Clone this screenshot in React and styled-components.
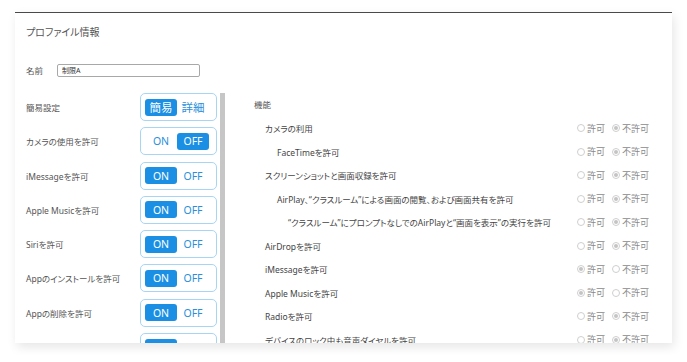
import React from "react"
import styled, { createGlobalStyle } from "styled-components"

const GlobalStyle = createGlobalStyle`
  body {
    margin: 0;
    background: #ffffff;
    font-family: "Noto Sans", "Noto Sans CJK JP", sans-serif;
    font-feature-settings: "palt";
  }
`

const leftRows = [
  { label: "簡易設定", options: ["簡易", "詳細"], active: 0 },
  { label: "カメラの使用を許可", options: ["ON", "OFF"], active: 1 },
  { label: "iMessageを許可", options: ["ON", "OFF"], active: 0 },
  { label: "Apple Musicを許可", options: ["ON", "OFF"], active: 0 },
  { label: "Siriを許可", options: ["ON", "OFF"], active: 0 },
  { label: "Appのインストールを許可", options: ["ON", "OFF"], active: 0 },
  { label: "Appの削除を許可", options: ["ON", "OFF"], active: 0 },
  { label: "システムAppの削除を許可", options: ["ON", "OFF"], active: 0 },
]

const rightRows = [
  { label: "カメラの利用", level: 1, allow: false },
  { label: "FaceTimeを許可", level: 2, allow: false },
  { label: "スクリーンショットと画面収録を許可", level: 1, allow: false },
  { label: "AirPlay、“クラスルーム”による画面の閲覧、および画面共有を許可", level: 2, allow: false },
  { label: "“クラスルーム”にプロンプトなしでのAirPlayと“画面を表示”の実行を許可", level: 3, allow: false },
  { label: "AirDropを許可", level: 1, allow: false },
  { label: "iMessageを許可", level: 1, allow: true },
  { label: "Apple Musicを許可", level: 1, allow: true },
  { label: "Radioを許可", level: 1, allow: false },
  { label: "デバイスのロック中も音声ダイヤルを許可", level: 1, allow: false },
  { label: "Safariを許可", level: 1, allow: true },
]

const App = () => (
  <Page>
    <GlobalStyle />
    <Card>
      <Title>プロファイル情報</Title>
      <NameRow>
        <NameLabel>名前</NameLabel>
        <NameInput defaultValue="制限A" />
      </NameRow>
      <Body>
        <LeftColumn>
          {leftRows.map(row => (
            <ToggleRow key={row.label}>
              <RowLabel>{row.label}</RowLabel>
              <Toggle>
                {row.options.map((opt, i) => (
                  <Segment key={opt} $active={i === row.active} $cjk={!/[A-Z]/.test(opt)}>
                    {opt}
                  </Segment>
                ))}
              </Toggle>
            </ToggleRow>
          ))}
        </LeftColumn>
        <RightColumn>
          <SectionTitle>機能</SectionTitle>
          {rightRows.map(row => (
            <FeatureRow key={row.label}>
              <FeatureLabel $level={row.level}>{row.label}</FeatureLabel>
              <RadioGroup>
                <RadioItem>
                  <RadioDot $checked={row.allow} />
                  許可
                </RadioItem>
                <RadioItem>
                  <RadioDot $checked={!row.allow} />
                  不許可
                </RadioItem>
              </RadioGroup>
            </FeatureRow>
          ))}
        </RightColumn>
      </Body>
    </Card>
  </Page>
)

export default App

const Page = styled.div`
  padding: 12px 15px;
`

const Card = styled.div`
  width: 657px;
  height: 331px;
  box-sizing: border-box;
  background: #fff;
  border-top: 1px solid #4a4a4a;
  box-shadow: 2px 4px 10px rgba(0, 0, 0, 0.1);
  overflow: hidden;
  display: flex;
  flex-direction: column;
`

const Title = styled.div`
  height: 39px;
  line-height: 39px;
  padding-left: 11px;
  font-size: 10px;
  color: #555;
  flex-shrink: 0;
`

const NameRow = styled.div`
  height: 36px;
  padding: 0 0 5px 11px;
  display: flex;
  align-items: center;
  flex-shrink: 0;
`

const NameLabel = styled.span`
  width: 31px;
  font-size: 8.5px;
  color: #555;
`

const NameInput = styled.input`
  width: 143px;
  height: 13px;
  box-sizing: border-box;
  border: 1px solid #a8a8a8;
  border-radius: 2px;
  padding: 0 4px;
  font-family: inherit;
  font-size: 7px;
  color: #333;
  outline: none;
`

const Body = styled.div`
  flex: 1;
  display: flex;
  min-height: 0;
`

const LeftColumn = styled.div`
  width: 210px;
  flex-shrink: 0;
  padding-left: 11px;
  box-sizing: border-box;
  border-right: 5px solid #c6c6c6;
  display: flex;
  flex-direction: column;
  gap: 6.3px;
`

const ToggleRow = styled.div`
  height: 28px;
  flex-shrink: 0;
  display: flex;
  align-items: center;
`

const RowLabel = styled.span`
  width: 114px;
  font-size: 8.5px;
  color: #555;
  white-space: nowrap;
`

const Toggle = styled.div`
  width: 77px;
  height: 28px;
  box-sizing: border-box;
  border: 1px solid #a9d5f4;
  border-radius: 5px;
  padding-left: 4px;
  display: flex;
  align-items: center;
`

const Segment = styled.span`
  width: 32px;
  height: 17px;
  border-radius: 3px;
  display: flex;
  align-items: center;
  justify-content: center;
  font-size: ${p => (p.$cjk ? "11.5px" : "10.5px")};
  color: ${p => (p.$active ? "#fff" : "#2a8fdc")};
  background: ${p => (p.$active ? "#1a8fe3" : "transparent")};
`

const RightColumn = styled.div`
  flex: 1;
  padding: 0 23px 0 29px;
  display: flex;
  flex-direction: column;
`

const SectionTitle = styled.div`
  height: 23.5px;
  line-height: 23.5px;
  flex-shrink: 0;
  font-size: 8.5px;
  color: #555;
`

const FeatureRow = styled.div`
  height: 23.5px;
  flex-shrink: 0;
  display: flex;
  align-items: center;
  justify-content: space-between;
`

const FeatureLabel = styled.span`
  padding-left: ${p => [0, 11, 23, 34][p.$level]}px;
  font-size: 8.5px;
  color: #444;
  white-space: nowrap;
`

const RadioGroup = styled.div`
  display: flex;
  align-items: center;
  gap: 7px;
`

const RadioItem = styled.span`
  display: flex;
  align-items: center;
  gap: 2px;
  font-size: 9px;
  color: #8a8a8a;
`

const RadioDot = styled.span`
  width: 6px;
  height: 6px;
  border: 1px solid #cfcfcf;
  border-radius: 50%;
  display: flex;
  align-items: center;
  justify-content: center;
  &::after {
    content: "";
    width: 4px;
    height: 4px;
    border-radius: 50%;
    background: ${p => (p.$checked ? "#c4c4c4" : "transparent")};
  }
`
